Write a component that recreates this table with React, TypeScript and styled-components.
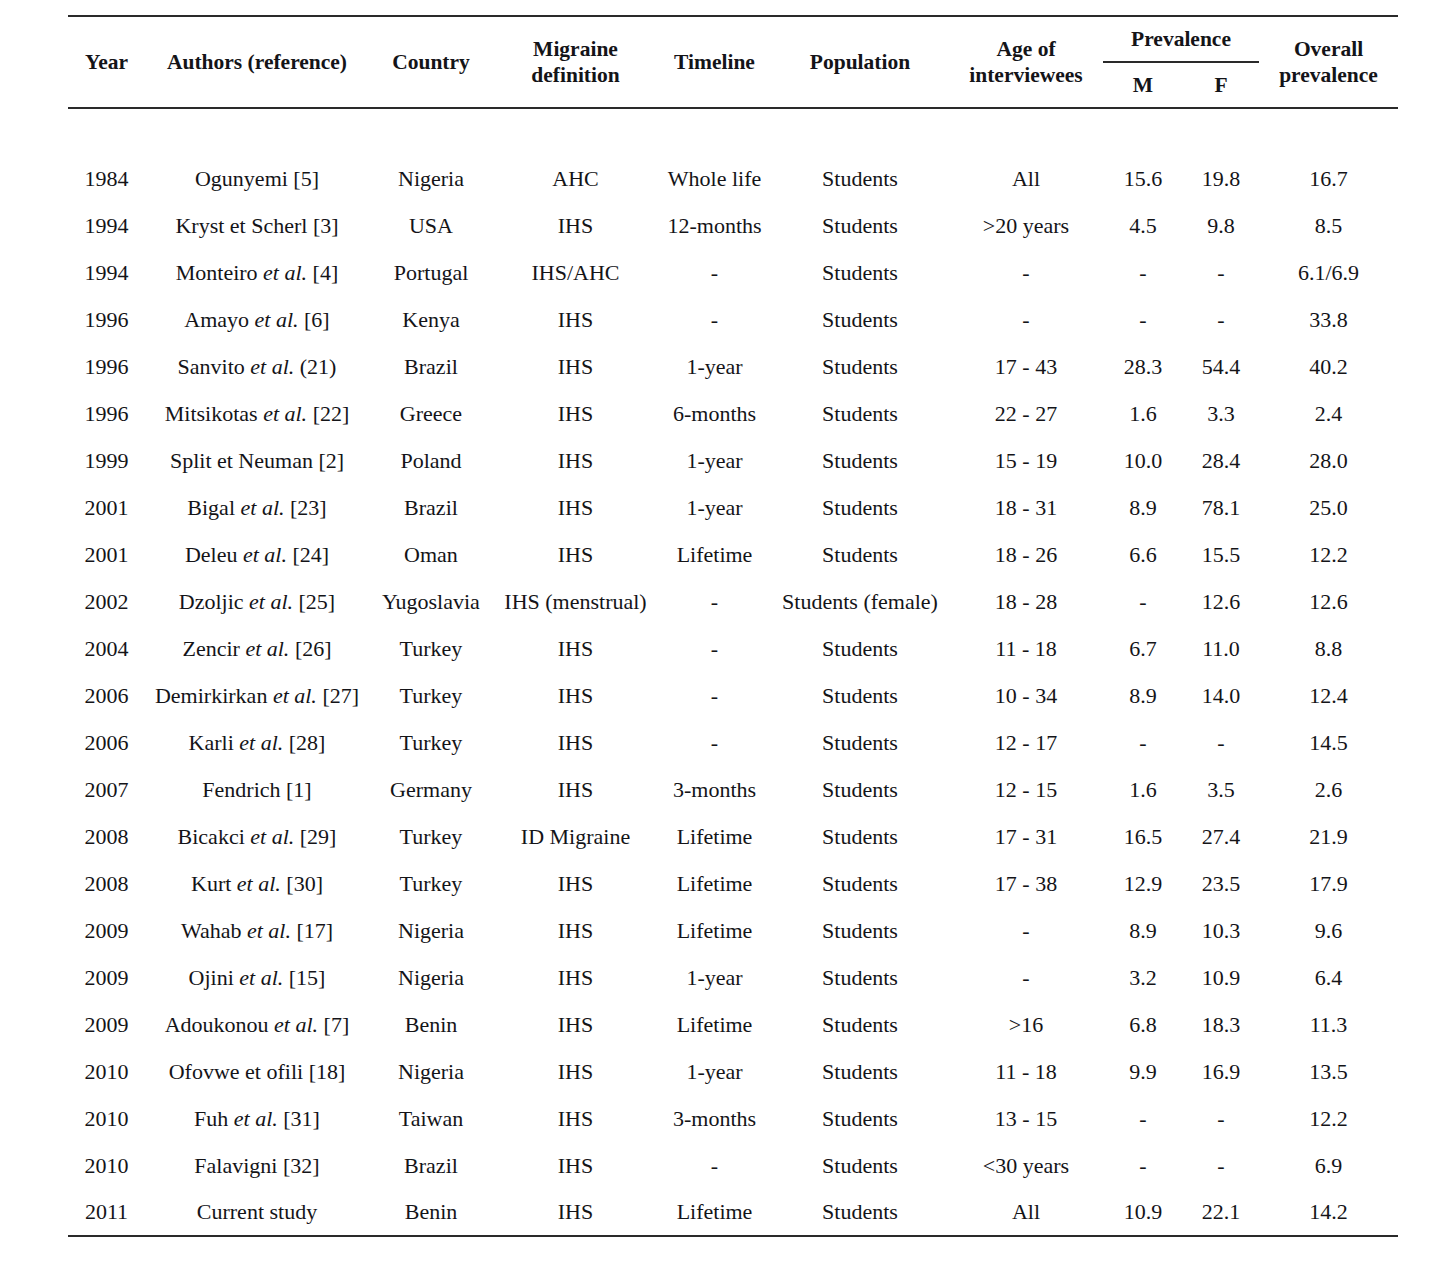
import React from "react";
import styled, { createGlobalStyle } from "styled-components";

const Global = createGlobalStyle`
  html, body { margin: 0; padding: 0; background: #ffffff; }
  body { font-family: "Liberation Serif", "Times New Roman", serif; color: #141418; }
`;

const Page = styled.div`
  padding: 15px 0 0 68px;
`;

const Table = styled.table`
  width: 1330px;
  border-collapse: collapse;
  table-layout: fixed;
  border-top: 2px solid #2a2a2a;
  border-bottom: 2px solid #2a2a2a;
  font-size: 22px;
`;

const Head = styled.thead`
  border-bottom: 2px solid #2a2a2a;
`;

const Th = styled.th<{ $underline?: boolean }>`
  font-weight: bold;
  font-size: 21.5px;
  line-height: 26px;
  text-align: center;
  vertical-align: middle;
  padding: 0;
  height: 44px;
  white-space: nowrap;
  border-bottom: ${(p) => (p.$underline ? "2px solid #2a2a2a" : "none")};
`;

const Spacer = styled.tr`
  height: 47px;
`;

const Row = styled.tr`
  height: 47px;
`;

const Td = styled.td`
  text-align: center;
  vertical-align: middle;
  padding: 0;
  white-space: nowrap;
  line-height: 24px;
`;

type Rec = {
  y: string;
  a: [string, string, string];
  c: string;
  d: string;
  t: string;
  p: string;
  age: string;
  m: string;
  f: string;
  o: string;
};

const r = (
  y: string,
  a: [string, string, string],
  c: string,
  d: string,
  t: string,
  p: string,
  age: string,
  m: string,
  f: string,
  o: string
): Rec => ({ y, a, c, d, t, p, age, m, f, o });

const EA = "et al.";

const rows: Rec[] = [
  r("1984", ["Ogunyemi [5]", "", ""], "Nigeria", "AHC", "Whole life", "Students", "All", "15.6", "19.8", "16.7"),
  r("1994", ["Kryst et Scherl [3]", "", ""], "USA", "IHS", "12-months", "Students", ">20 years", "4.5", "9.8", "8.5"),
  r("1994", ["Monteiro ", EA, " [4]"], "Portugal", "IHS/AHC", "-", "Students", "-", "-", "-", "6.1/6.9"),
  r("1996", ["Amayo ", EA, " [6]"], "Kenya", "IHS", "-", "Students", "-", "-", "-", "33.8"),
  r("1996", ["Sanvito ", EA, " (21)"], "Brazil", "IHS", "1-year", "Students", "17 - 43", "28.3", "54.4", "40.2"),
  r("1996", ["Mitsikotas ", EA, " [22]"], "Greece", "IHS", "6-months", "Students", "22 - 27", "1.6", "3.3", "2.4"),
  r("1999", ["Split et Neuman [2]", "", ""], "Poland", "IHS", "1-year", "Students", "15 - 19", "10.0", "28.4", "28.0"),
  r("2001", ["Bigal ", EA, " [23]"], "Brazil", "IHS", "1-year", "Students", "18 - 31", "8.9", "78.1", "25.0"),
  r("2001", ["Deleu ", EA, " [24]"], "Oman", "IHS", "Lifetime", "Students", "18 - 26", "6.6", "15.5", "12.2"),
  r("2002", ["Dzoljic ", EA, " [25]"], "Yugoslavia", "IHS (menstrual)", "-", "Students (female)", "18 - 28", "-", "12.6", "12.6"),
  r("2004", ["Zencir ", EA, " [26]"], "Turkey", "IHS", "-", "Students", "11 - 18", "6.7", "11.0", "8.8"),
  r("2006", ["Demirkirkan ", EA, " [27]"], "Turkey", "IHS", "-", "Students", "10 - 34", "8.9", "14.0", "12.4"),
  r("2006", ["Karli ", EA, " [28]"], "Turkey", "IHS", "-", "Students", "12 - 17", "-", "-", "14.5"),
  r("2007", ["Fendrich [1]", "", ""], "Germany", "IHS", "3-months", "Students", "12 - 15", "1.6", "3.5", "2.6"),
  r("2008", ["Bicakci ", EA, " [29]"], "Turkey", "ID Migraine", "Lifetime", "Students", "17 - 31", "16.5", "27.4", "21.9"),
  r("2008", ["Kurt ", EA, " [30]"], "Turkey", "IHS", "Lifetime", "Students", "17 - 38", "12.9", "23.5", "17.9"),
  r("2009", ["Wahab ", EA, " [17]"], "Nigeria", "IHS", "Lifetime", "Students", "-", "8.9", "10.3", "9.6"),
  r("2009", ["Ojini ", EA, " [15]"], "Nigeria", "IHS", "1-year", "Students", "-", "3.2", "10.9", "6.4"),
  r("2009", ["Adoukonou ", EA, " [7]"], "Benin", "IHS", "Lifetime", "Students", ">16", "6.8", "18.3", "11.3"),
  r("2010", ["Ofovwe et ofili [18]", "", ""], "Nigeria", "IHS", "1-year", "Students", "11 - 18", "9.9", "16.9", "13.5"),
  r("2010", ["Fuh ", EA, " [31]"], "Taiwan", "IHS", "3-months", "Students", "13 - 15", "-", "-", "12.2"),
  r("2010", ["Falavigni [32]", "", ""], "Brazil", "IHS", "-", "Students", "<30 years", "-", "-", "6.9"),
  r("2011", ["Current study", "", ""], "Benin", "IHS", "Lifetime", "Students", "All", "10.9", "22.1", "14.2"),
];

const widths = [77, 224, 124, 165, 113, 178, 154, 80, 76, 139];

export default function App() {
  return (
    <Page>
      <Global />
      <Table>
        <colgroup>
          {widths.map((w, i) => (
            <col key={i} style={{ width: w }} />
          ))}
        </colgroup>
        <Head>
          <tr>
            <Th rowSpan={2}>Year</Th>
            <Th rowSpan={2}>Authors (reference)</Th>
            <Th rowSpan={2}>Country</Th>
            <Th rowSpan={2}>
              Migraine
              <br />
              definition
            </Th>
            <Th rowSpan={2}>Timeline</Th>
            <Th rowSpan={2}>Population</Th>
            <Th rowSpan={2}>
              Age of
              <br />
              interviewees
            </Th>
            <Th colSpan={2} $underline>
              Prevalence
            </Th>
            <Th rowSpan={2}>
              Overall
              <br />
              prevalence
            </Th>
          </tr>
          <tr>
            <Th>M</Th>
            <Th>F</Th>
          </tr>
        </Head>
        <tbody>
          <Spacer>
            <td colSpan={10} />
          </Spacer>
          {rows.map((row, i) => (
            <Row key={i}>
              <Td>{row.y}</Td>
              <Td>
                {row.a[0]}
                {row.a[1] && <i>{row.a[1]}</i>}
                {row.a[2]}
              </Td>
              <Td>{row.c}</Td>
              <Td>{row.d}</Td>
              <Td>{row.t}</Td>
              <Td>{row.p}</Td>
              <Td>{row.age}</Td>
              <Td>{row.m}</Td>
              <Td>{row.f}</Td>
              <Td>{row.o}</Td>
            </Row>
          ))}
        </tbody>
      </Table>
    </Page>
  );
}
